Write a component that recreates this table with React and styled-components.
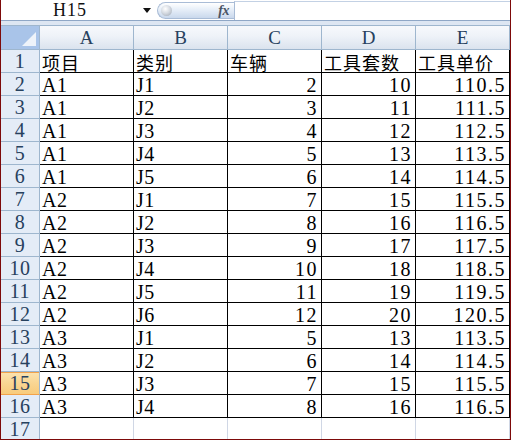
import React from "react";
import styled, { createGlobalStyle, css } from "styled-components";

const GlobalStyle = createGlobalStyle`
  html, body { margin: 0; padding: 0; background: #ffffff; }
  #root { width: 512px; height: 440px; }
`;

const Frame = styled.div`
  width: 511px;
  height: 440px;
  box-sizing: border-box;
  border-left: 1px solid #7d0a0a;
  border-right: 1px solid #7d0a0a;
  border-bottom: 1px solid #7d0a0a;
  overflow: hidden;
  background: #ffffff;
  display: flex;
  flex-direction: column;
`;

const FormulaBar = styled.div`
  height: 21px;
  flex: none;
  display: flex;
  align-items: stretch;
  box-sizing: border-box;
  border-bottom: 1px solid #8fa7c6;
  background: #ffffff;
`;

const NameBox = styled.div`
  width: 156px;
  flex: none;
  display: flex;
  align-items: center;
  font-family: "Liberation Serif", serif;
  font-size: 18px;
  color: #111;
`;

const NameText = styled.span`
  flex: 1;
  text-align: center;
  padding-left: 4px;
  padding-top: 1px;
  letter-spacing: 1px;
`;

const DropArrow = styled.span`
  width: 0;
  height: 0;
  border-left: 4px solid transparent;
  border-right: 4px solid transparent;
  border-top: 5px solid #111;
  margin-right: 6px;
  margin-left: 8px;
`;

const FxPill = styled.div`
  width: 77px;
  flex: none;
  margin: 2px 0 1px 0;
  box-sizing: border-box;
  border: 1px solid #a9bcd6;
  border-right: none;
  border-radius: 9px 0 0 9px;
  background: linear-gradient(#ffffff 0%, #e6eef8 45%, #c9d8ec 100%);
  display: flex;
  align-items: center;
  justify-content: space-between;
  padding: 0 5px 0 3px;
`;

const Knob = styled.span`
  width: 11px;
  height: 11px;
  border-radius: 50%;
  background: radial-gradient(circle at 40% 35%, #ffffff 0%, #d6dbe2 45%, #9aa4b0 100%);
`;

const FxText = styled.span`
  font-family: "Liberation Serif", serif;
  font-style: italic;
  font-weight: bold;
  font-size: 14px;
  color: #4b5565;
  letter-spacing: -0.5px;
`;

const FormulaInput = styled.div`
  flex: 1;
  margin: 1px 0 0 0;
  box-sizing: border-box;
  border-left: 1px solid #a9bcd6;
  border-top: 1px solid #c3d1e4;
  background: #ffffff;
`;

const Gap = styled.div`
  height: 4px;
  flex: none;
  background: #dde6f2;
`;

const Grid = styled.div`
  display: grid;
  grid-template-columns: 39px repeat(5, 94px);
  grid-auto-rows: 23px;
  grid-template-rows: 24px;
  border-top: 1px solid #9eb6ce;
`;

const Corner = styled.div`
  box-sizing: border-box;
  border-right: 1px solid #9eb6ce;
  border-bottom: 1px solid #9eb6ce;
  background: #a9c4e9;
  position: relative;
  &::after {
    content: "";
    position: absolute;
    right: 3px;
    bottom: 3px;
    width: 0;
    height: 0;
    border-left: 14px solid transparent;
    border-bottom: 14px solid #eef3fa;
  }
`;

const ColHead = styled.div`
  box-sizing: border-box;
  border-right: 1px solid #9eb6ce;
  border-bottom: 1px solid #9eb6ce;
  background: linear-gradient(#f7f9fc 0%, #eef2f8 45%, #dbe3ee 100%);
  display: flex;
  align-items: center;
  justify-content: center;
  font-family: "Liberation Serif", serif;
  font-size: 19px;
  color: #27415e;
  padding-top: 1px;
`;

const RowHead = styled.div`
  box-sizing: border-box;
  border-right: 1px solid #9eb6ce;
  border-bottom: 1px solid #9eb6ce;
  background: #e4ecf7;
  display: flex;
  align-items: center;
  justify-content: center;
  font-family: "Liberation Serif", serif;
  font-size: 20px;
  color: #27415e;
  padding-top: 1px;
  letter-spacing: 0.5px;
  ${(p) =>
    p.$active &&
    css`
      background: linear-gradient(#fbe3b0 0%, #f9d693 50%, #f8cb7c 100%);
      border-bottom-color: #f2a24a;
      box-shadow: inset 0 1px 0 #f2a24a;
    `}
`;

const Cell = styled.div`
  box-sizing: border-box;
  border-right: 1px solid ${(p) => (p.$empty ? "#d0d7e5" : "#000000")};
  border-bottom: 1px solid ${(p) => (p.$empty ? "#d0d7e5" : "#000000")};
  display: flex;
  align-items: center;
  justify-content: ${(p) => (p.$num ? "flex-end" : "flex-start")};
  padding: 2px 3px 0 2px;
  font-family: "Liberation Serif", "Noto Sans CJK SC", serif;
  font-size: 20px;
  line-height: 20px;
  color: #000;
  white-space: nowrap;
  letter-spacing: ${(p) => (p.$num ? "1.5px" : "0.5px")};
`;

const Cjk = styled.span`
  font-family: "Noto Sans CJK SC", sans-serif;
  font-size: 18px;
  letter-spacing: 1px;
  line-height: 20px;
`;

const cols = ["A", "B", "C", "D", "E"];
const headers = ["项目", "类别", "车辆", "工具套数", "工具单价"];
const data = [
  ["A1", "J1", 2, 10, "110.5"],
  ["A1", "J2", 3, 11, "111.5"],
  ["A1", "J3", 4, 12, "112.5"],
  ["A1", "J4", 5, 13, "113.5"],
  ["A1", "J5", 6, 14, "114.5"],
  ["A2", "J1", 7, 15, "115.5"],
  ["A2", "J2", 8, 16, "116.5"],
  ["A2", "J3", 9, 17, "117.5"],
  ["A2", "J4", 10, 18, "118.5"],
  ["A2", "J5", 11, 19, "119.5"],
  ["A2", "J6", 12, 20, "120.5"],
  ["A3", "J1", 5, 13, "113.5"],
  ["A3", "J2", 6, 14, "114.5"],
  ["A3", "J3", 7, 15, "115.5"],
  ["A3", "J4", 8, 16, "116.5"],
];

export default function App() {
  return (
    <>
      <GlobalStyle />
      <Frame>
        <FormulaBar>
          <NameBox>
            <NameText>H15</NameText>
            <DropArrow />
          </NameBox>
          <FxPill>
            <Knob />
            <FxText>fx</FxText>
          </FxPill>
          <FormulaInput />
        </FormulaBar>
        <Gap />
        <Grid>
          <Corner />
          {cols.map((c) => (
            <ColHead key={c}>{c}</ColHead>
          ))}
          <RowHead>1</RowHead>
          {headers.map((h) => (
            <Cell key={h}>
              <Cjk>{h}</Cjk>
            </Cell>
          ))}
          {data.map((row, i) => (
            <React.Fragment key={i}>
              <RowHead $active={i + 2 === 15}>{i + 2}</RowHead>
              {row.map((v, j) => (
                <Cell key={j} $num={j >= 2}>
                  {v}
                </Cell>
              ))}
            </React.Fragment>
          ))}
          <RowHead>17</RowHead>
          {cols.map((c) => (
            <Cell key={c} $empty />
          ))}
        </Grid>
      </Frame>
    </>
  );
}
